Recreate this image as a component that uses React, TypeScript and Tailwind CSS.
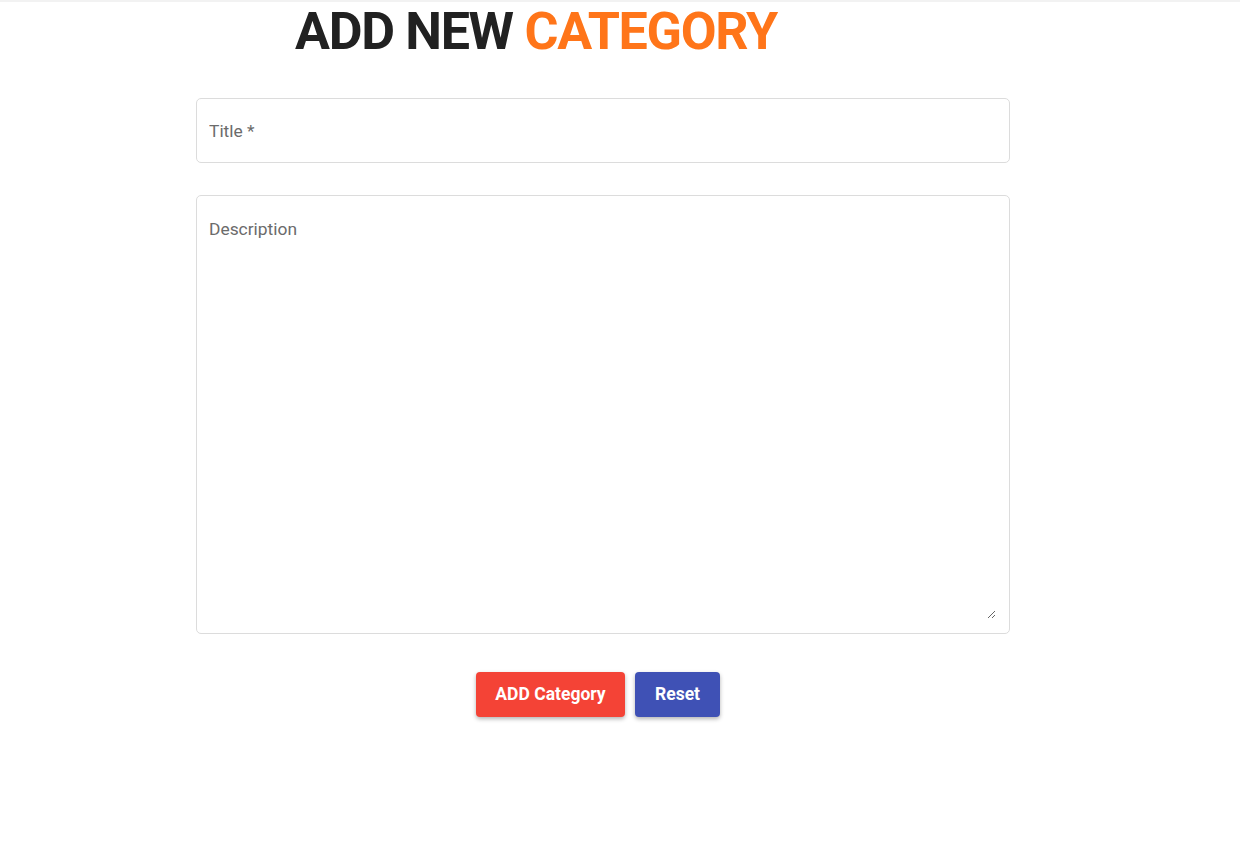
export default function App() {
  return (
    <div className="min-h-screen bg-white border-t-2 border-[#f2f2f2] font-['Roboto',sans-serif]">
      <h1 className="ml-[295px] mt-[4px] text-[52px] leading-[52px] font-bold tracking-[-1.3px] text-[#212121]">
        ADD NEW <span className="text-[#ff7519]">CATEGORY</span>
      </h1>
      <form className="ml-[196px] mt-[40px] w-[814px] flex flex-col gap-[32px]">
        <input
          type="text"
          placeholder="Title *"
          className="h-[65px] w-full rounded-[5px] border border-[#dcdcdc] px-[12px] text-[17.4px] text-[#333] placeholder:text-[#6b6b6b] outline-none"
        />
        <div className="flex h-[439px] w-full rounded-[5px] border border-[#dcdcdc] pl-[12px] pr-[13px] pt-[20px] pb-[14px]">
          <textarea
            placeholder="Description"
            className="h-full w-full text-[17.4px] text-[#333] placeholder:text-[#6b6b6b] outline-none"
          />
        </div>
        <div className="mt-[6px] flex justify-center gap-[10px] pr-[10px]">
          <button
            type="button"
            className="h-[45px] w-[149px] rounded-[4px] bg-[#f44336] text-[17.5px] font-bold text-white shadow-[0_2px_4px_rgba(0,0,0,0.3)]"
          >
            ADD Category
          </button>
          <button
            type="button"
            className="h-[45px] w-[85px] rounded-[4px] bg-[#3f51b5] text-[17.5px] font-bold text-white shadow-[0_2px_4px_rgba(0,0,0,0.3)]"
          >
            Reset
          </button>
        </div>
      </form>
    </div>
  )
}
